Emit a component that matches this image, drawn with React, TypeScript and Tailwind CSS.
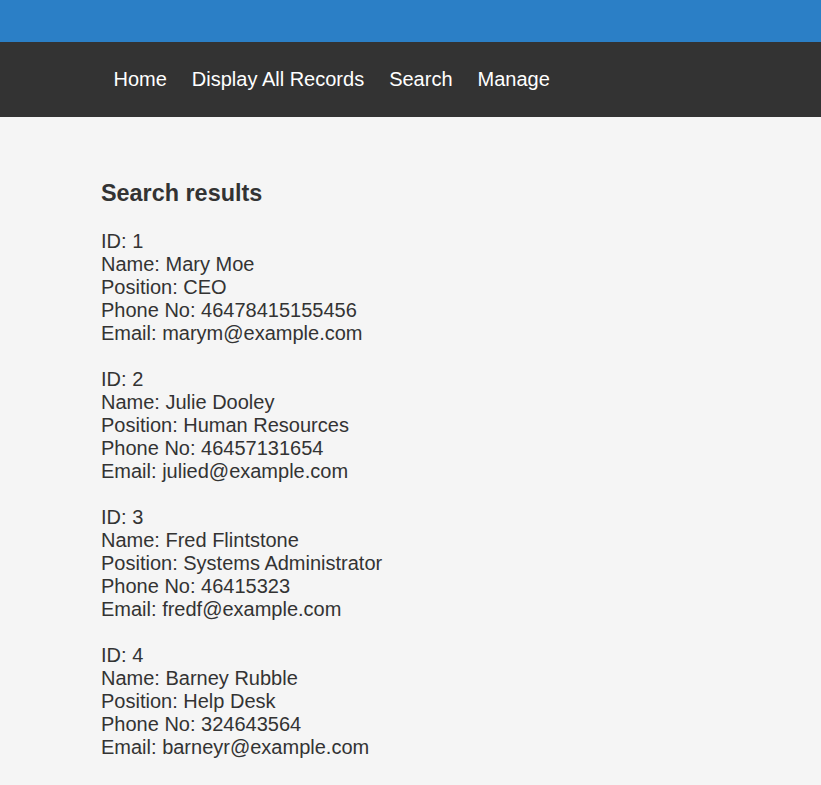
import React from 'react';

const records = [
  { id: 1, name: 'Mary Moe', position: 'CEO', phone: '46478415155456', email: 'marym@example.com' },
  { id: 2, name: 'Julie Dooley', position: 'Human Resources', phone: '46457131654', email: 'julied@example.com' },
  { id: 3, name: 'Fred Flintstone', position: 'Systems Administrator', phone: '46415323', email: 'fredf@example.com' },
  { id: 4, name: 'Barney Rubble', position: 'Help Desk', phone: '324643564', email: 'barneyr@example.com' },
];

const navItems = ['Home', 'Display All Records', 'Search', 'Manage'];

const App = () => {
  return (
    <div className="min-h-[785px] bg-[#f5f5f5] text-[#333] font-['Liberation_Sans',Arial,sans-serif]">
      {/* Top strip */}
      <div className="h-[42px] bg-[#2b7fc6]" />

      {/* Nav */}
      <nav className="h-[75px] bg-[#333] flex items-center pl-[101px]">
        {navItems.map((item) => (
          <a key={item} href="#" className="px-[12.5px] text-[20px] leading-[23px] text-white">
            {item}
          </a>
        ))}
      </nav>

      {/* Results */}
      <div className="pl-[101px] pt-[63px] pb-6">
        <h3 className="text-[23.4px] leading-[27px] font-bold">Search results</h3>
        <div className="mt-[23px] text-[20px] leading-[23px] flex flex-col gap-[23px]">
          {records.map((r) => (
            <div key={r.id}>
              <div>ID: {r.id}</div>
              <div>Name: {r.name}</div>
              <div>Position: {r.position}</div>
              <div>Phone No: {r.phone}</div>
              <div>Email: {r.email}</div>
            </div>
          ))}
        </div>
      </div>
    </div>
  );
};

export default App;
